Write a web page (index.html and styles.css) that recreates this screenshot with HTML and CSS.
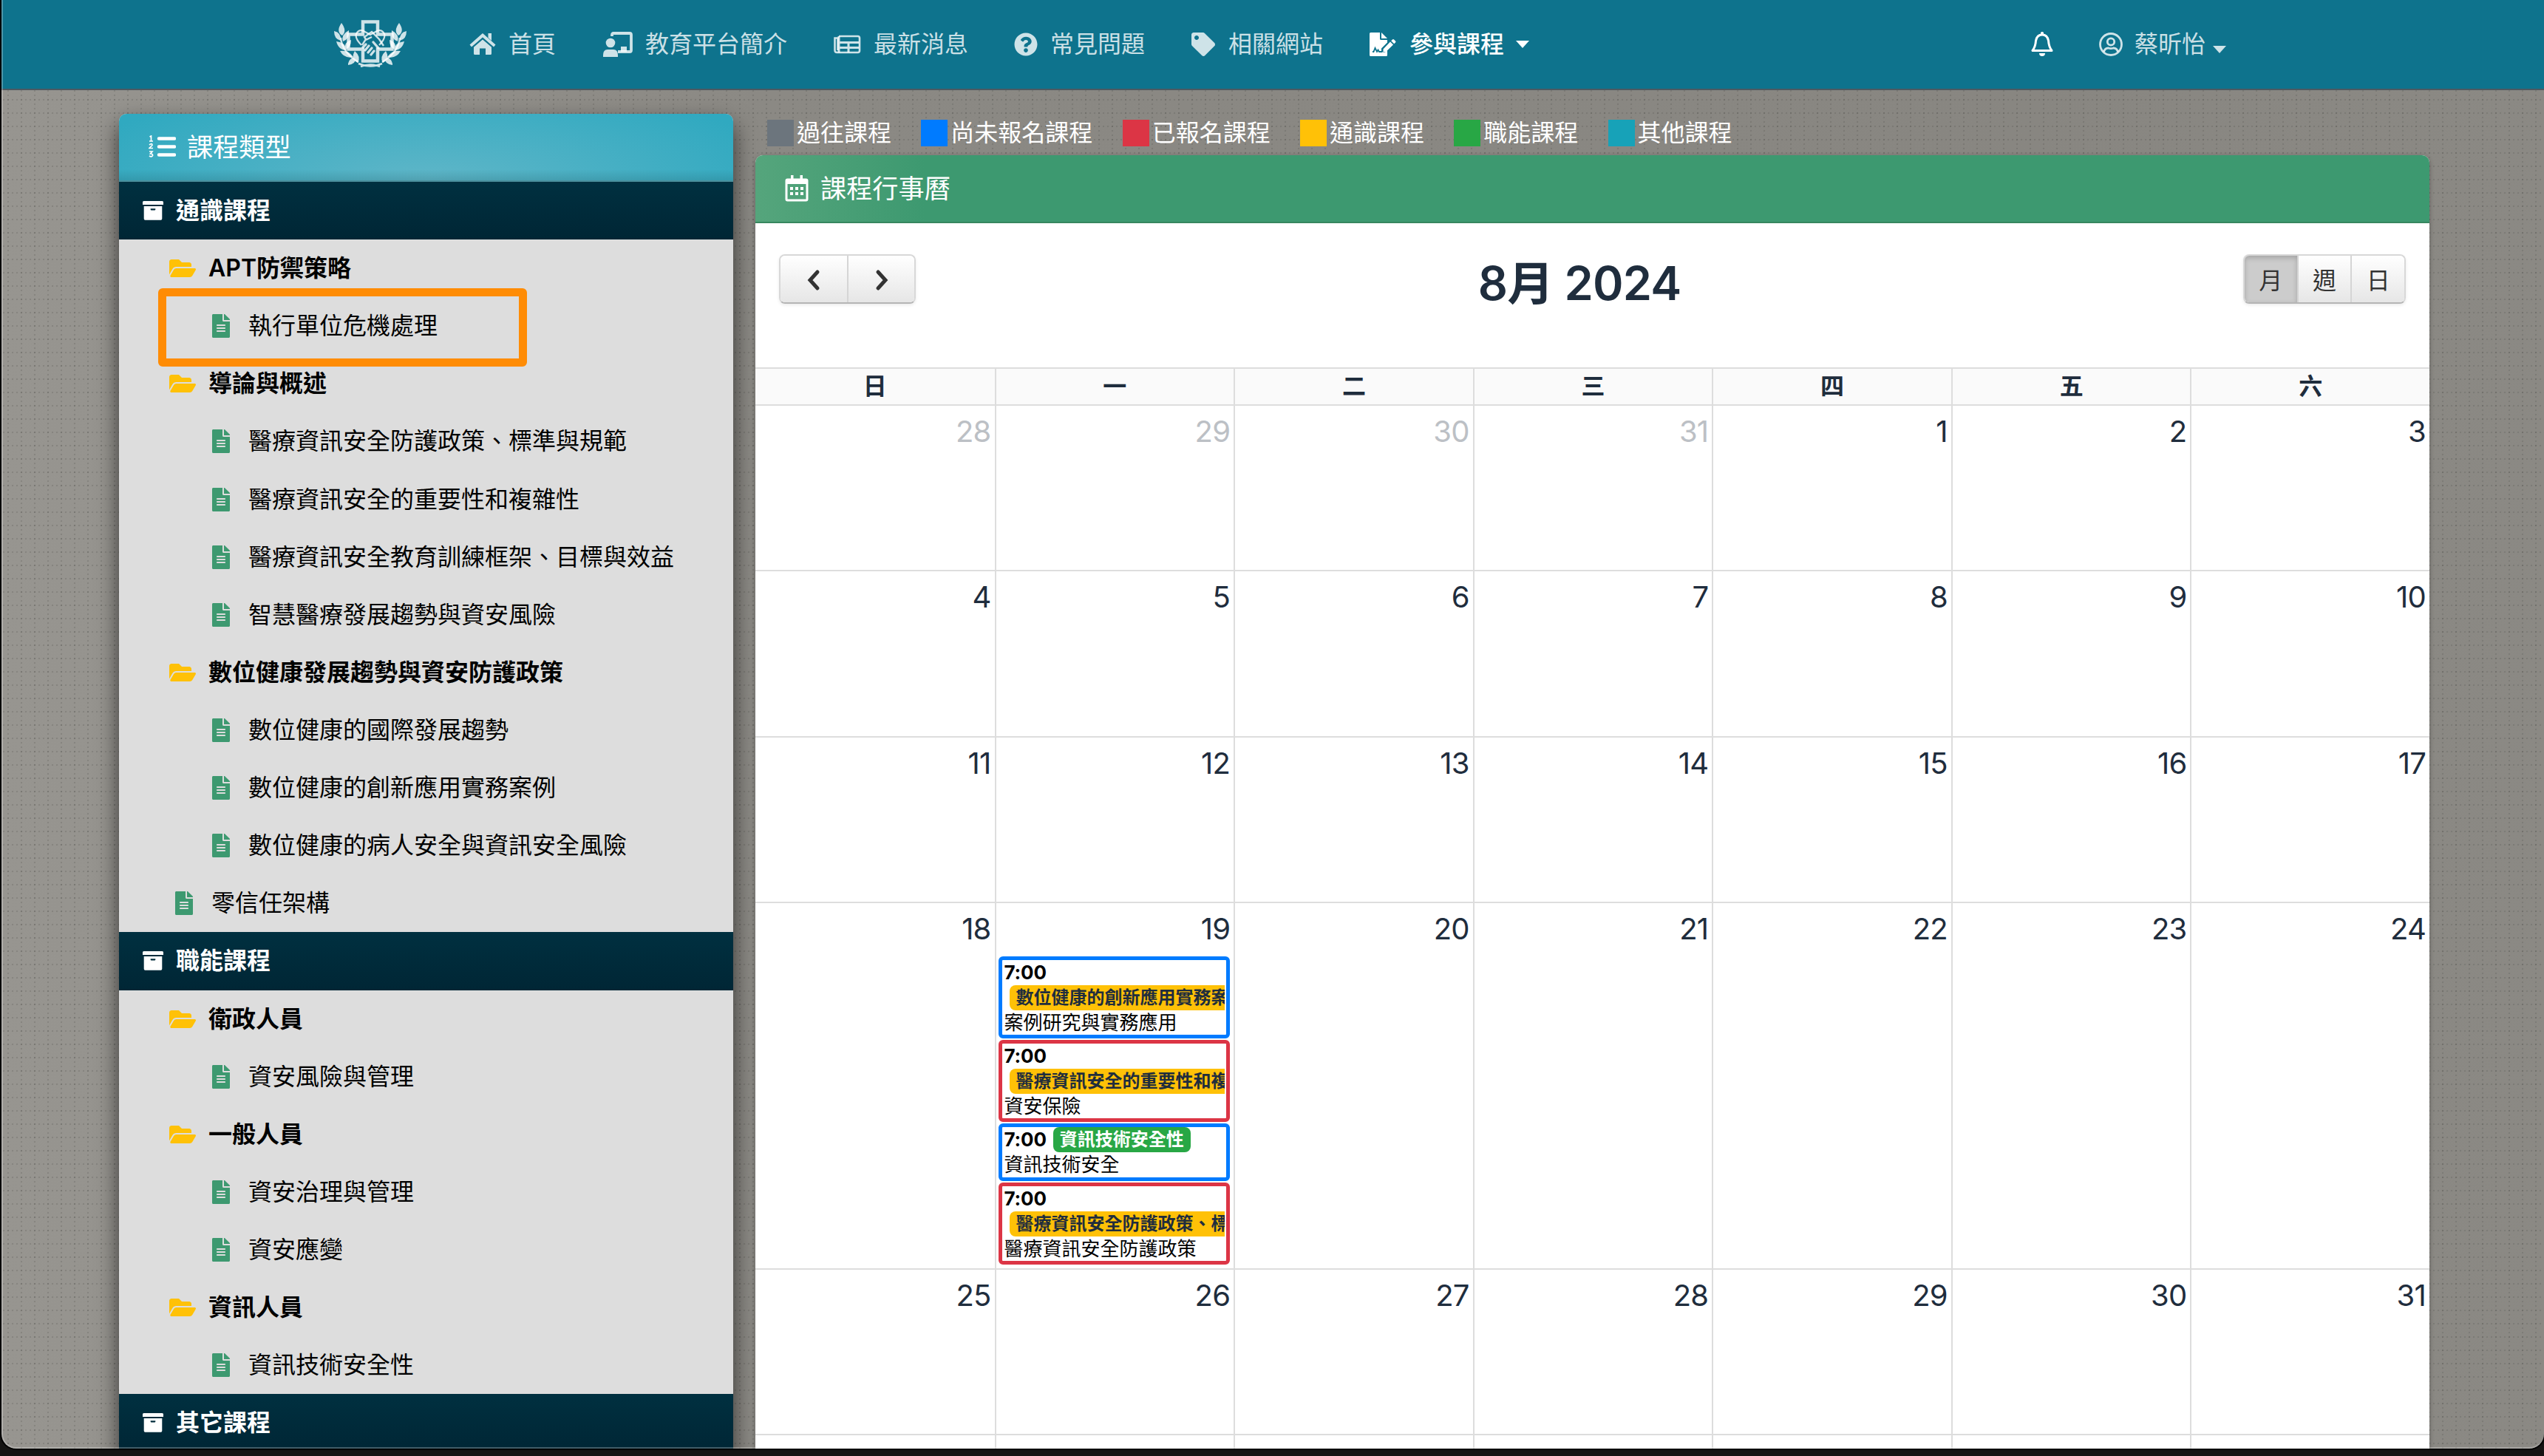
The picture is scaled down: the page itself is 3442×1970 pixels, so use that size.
FILE: index.html
```html
<!DOCTYPE html>
<html lang="zh-Hant">
<head>
<meta charset="utf-8">
<title>課程行事曆</title>
<link rel="stylesheet" href="styles.css">
</head>
<body>
<svg class="defs" aria-hidden="true">
  <symbol id="folder" viewBox="0 0 576 512"><path d="M572.694 292.093L500.27 416.248A63.997 63.997 0 0 1 444.989 448H45.025c-18.523 0-30.064-20.093-20.731-36.093l72.424-124.155A64 64 0 0 1 152 256h399.964c18.523 0 30.064 20.093 20.73 36.093zM152 224h328v-48c0-26.51-21.49-48-48-48H272l-64-64H48C21.49 64 0 85.49 0 112v278.046l69.077-118.418C86.214 242.25 117.989 224 152 224z"/></symbol>
  <symbol id="file" viewBox="0 0 384 512"><path d="M224 136V0H24C10.7 0 0 10.7 0 24v464c0 13.3 10.7 24 24 24h336c13.3 0 24-10.7 24-24V160H248c-13.2 0-24-10.8-24-24zm64 236c0 6.600-5.400 12-12 12H108c-6.600 0-12-5.400-12-12v-8c0-6.600 5.400-12 12-12h168c6.600 0 12 5.400 12 12v8zm0-64c0 6.600-5.400 12-12 12H108c-6.600 0-12-5.400-12-12v-8c0-6.600 5.400-12 12-12h168c6.600 0 12 5.400 12 12v8zm0-72v8c0 6.600-5.400 12-12 12H108c-6.600 0-12-5.400-12-12v-8c0-6.600 5.400-12 12-12h168c6.600 0 12 5.400 12 12zm96-114.100v6.100H256V0h6.100c6.400 0 12.500 2.500 17 7l97.900 98c4.500 4.500 7 10.600 7 16.900z"/></symbol>
  <symbol id="box" viewBox="0 0 28 26"><path d="M1.500 0h25a1.500 1.500 0 0 1 1.500 1.500v3.500h-28v-3.500a1.500 1.500 0 0 1 1.500-1.500zM1.700 7h24.600v17a1.700 1.700 0 0 1-1.700 1.700h-21.200a1.700 1.700 0 0 1-1.700-1.700zM10.700 10.300v1.300q0 .8 .8 .8h5q.8 0 .8-.8v-1.300z" fill-rule="evenodd"/></symbol>
</svg>
<div class="window">
<nav class="navbar">
  <a class="brand"><svg width="98" height="66" viewBox="0 0 98 66">
    <g fill="none" stroke="currentColor">
      <path d="M39 2.500h20v17h19.500v20h-19.500v16h-20v-16h-19.500v-20h19.500z" stroke-width="4.500"/>
      <path d="M37 34q-9-9-7-15 3-6 9-4.500l10 5.500 10-5.500q6-1.500 9 4.500 2 6-7 15" stroke-width="2.200"/>
      <path d="M38 34l5-8-2-3 10-7 10 10 6 9M51 23l-8 4" stroke-width="2.400"/>
      <path d="M39 37l4-4M42 41l5-6M46 44l5-6M50 47l4-5M53 30l7 8" stroke-width="3.200" stroke-linecap="round"/>
      <path d="M9 24q2 20 24 33M89 24q-2 20-24 33M33 59q16 7 32 0M36 63q13-5 26 0" stroke-width="2.500"/>
    </g>
    <g fill="currentColor">
      <g id="sprig"><path d="M10 4q8 11 1 17-9-5-1-17zM0 15q10 2 9 13-9-2-9-13zM20 14q2 11-8 15-3-9 8-15zM3 29q12 1 14 12-11 0-14-12zM23 27q0 10-7 13-4-9 7-13zM8 42q11-2 18 8-12 3-18-8zM19 59q1-8 12-9-2 10-12 11zM28 42q9 8 4 16-10-6-4-16z"/></g>
      <use href="#sprig" transform="matrix(-1 0 0 1 98 0)"/>
    </g>
  </svg></a>
  <a class="link home"><svg width="36" height="30" viewBox="0 0 36 30"><path d="M18 0L35.500 15.500l-2.500 3L18 5.500 3 18.500l-2.500-3zM25.500 0h4.500v10l-4.500-4zM18 8.500l12 10.300v8.700q0 1.500-1.500 1.500h-6.500v-8.500h-8v8.500h-6.500q-1.500 0-1.500-1.500v-8.700z" fill="currentColor"/></svg><span>首頁</span></a>
  <a class="link about"><svg width="40" height="34" viewBox="0 0 40 34"><path d="M12 6v-2q0-2 2-2h22q2 0 2 2v21q0 2-2 2h-16" fill="none" stroke="currentColor" stroke-width="3.800"/><path d="M24 20h8v7h-8z" fill="currentColor"/><circle cx="10" cy="15" r="6.300" fill="currentColor"/><path d="M0 34v-2.500q0-7.500 6-7.500h8q6 0 6 7.500v2.500z" fill="currentColor"/></svg><span>教育平台簡介</span></a>
  <a class="link news"><svg width="37" height="26" viewBox="0 0 37 26"><path d="M7 2h25.500q2.500 0 2.500 2.500v17q0 2.500-2.500 2.500h-28q-3 0-3-3v-16.500h4v16.500" fill="none" stroke="currentColor" stroke-width="2.600"/><path d="M7 2v22M6 10.500h28M6 17.500h28M20 10v14" fill="none" stroke="currentColor" stroke-width="3"/></svg><span>最新消息</span></a>
  <a class="link faq"><svg width="32" height="32" viewBox="0 0 512 512"><path fill="currentColor" d="M504 256c0 136.997-111.043 248-248 248S8 392.997 8 256C8 119.083 119.043 8 256 8s248 111.083 248 248zM262.655 90c-54.497 0-89.255 22.957-116.549 63.758-3.536 5.286-2.353 12.415 2.715 16.258l34.699 26.310c5.205 3.947 12.621 3.008 16.665-2.122 17.864-22.658 30.113-35.797 57.303-35.797 20.429 0 45.698 13.148 45.698 32.958 0 14.976-12.363 22.667-32.534 33.976C247.128 238.528 216 254.941 216 296v4c0 6.627 5.373 12 12 12h56c6.627 0 12-5.373 12-12v-1.333c0-28.462 83.186-29.647 83.186-106.667 0-58.002-60.165-102-116.531-102zM256 338c-25.365 0-46 20.635-46 46 0 25.364 20.635 46 46 46s46-20.636 46-46c0-25.364-20.635-46-46-46z"/></svg><span>常見問題</span></a>
  <a class="link sites"><svg width="32" height="32" viewBox="0 0 512 512"><path fill="currentColor" d="M0 252.118V48C0 21.490 21.490 0 48 0h204.118a48 48 0 0 1 33.941 14.059l211.882 211.882c18.745 18.745 18.745 49.137 0 67.882L293.823 497.941c-18.745 18.745-49.137 18.745-67.882 0L14.059 286.059A48 48 0 0 1 0 252.118zM112 64c-26.510 0-48 21.490-48 48s21.490 48 48 48 48-21.490 48-48-21.490-48-48-48z"/></svg><span>相關網站</span></a>
  <a class="link join active"><svg width="36" height="32" viewBox="0 0 36 32"><path fill="currentColor" d="M2 0h12v8.500q0 1.500 1.500 1.500h8.500v3.500l-8 8v5h5l3-3v7q0 1.500-1.500 1.500h-21q-1.500 0-1.500-1.500v-29q0-1.500 1.500-1.500zM16 0l8 8h-8zM18.500 22.500l9.500-10 4 4-9.800 9.500h-3.700zM29.200 11.300l1.800-1.800q1-1 2 0l2 2q1 1 0 2l-1.800 1.800z"/><path d="M4 26h1.500l2-5 2.500 5 1.500-2.500 1.500 2.500h4" fill="none" stroke="#0e738d" stroke-width="1.800"/></svg><span>參與課程</span><i class="caret"></i></a>
  <a class="bell"><svg width="30" height="34" viewBox="0 0 30 34"><path d="M15 4q-7 0-8.500 8-.5 8-4.500 13.500h26q-4-5.500-4.500-13.500-1.500-8-8.500-8z" fill="none" stroke="currentColor" stroke-width="3" stroke-linejoin="round"/><path d="M13 1q2-2 4 0v4h-4zM11 29h8q0 4-4 4t-4-4z" fill="currentColor"/></svg></a>
  <a class="link user"><svg width="32" height="32" viewBox="0 0 32 32" fill="none" stroke="currentColor" stroke-width="2.800"><circle cx="16" cy="16" r="14.500"/><circle cx="16" cy="12.500" r="4.700"/><path d="M6.500 26q1.500-5 6-5 3.500 1.300 7 0 4.500 0 6 5"/></svg><span>蔡昕怡</span><i class="caret"></i></a>
</nav>

<main class="page">
<aside class="sidebar">
  <header class="side-title"><svg width="37" height="32" viewBox="0 0 37 32"><path d="M14 4.500h21M14 15.500h21M14 26.500h21" stroke="#fff" stroke-width="4.500" stroke-linecap="round"/><path d="M1.500 2l2-1v6.500M1 8h5M1 13q4-3 4 .5l-4 4h5M1 22h4l-2.500 3q3.500 0 3 2.500-1.500 2.500-4.500 .5" fill="none" stroke="#fff" stroke-width="1.700"/></svg><span>課程類型</span></header>
  <h3 class="section"><svg><use href="#box"/></svg>通識課程</h3>
  <ul class="tree">
    <li class="folder"><svg><use href="#folder"/></svg>APT防禦策略</li>
    <li class="item marked"><svg><use href="#file"/></svg>執行單位危機處理</li>
    <li class="folder"><svg><use href="#folder"/></svg>導論與概述</li>
    <li class="item"><svg><use href="#file"/></svg>醫療資訊安全防護政策、標準與規範</li>
    <li class="item"><svg><use href="#file"/></svg>醫療資訊安全的重要性和複雜性</li>
    <li class="item"><svg><use href="#file"/></svg>醫療資訊安全教育訓練框架、目標與效益</li>
    <li class="item"><svg><use href="#file"/></svg>智慧醫療發展趨勢與資安風險</li>
    <li class="folder"><svg><use href="#folder"/></svg>數位健康發展趨勢與資安防護政策</li>
    <li class="item"><svg><use href="#file"/></svg>數位健康的國際發展趨勢</li>
    <li class="item"><svg><use href="#file"/></svg>數位健康的創新應用實務案例</li>
    <li class="item"><svg><use href="#file"/></svg>數位健康的病人安全與資訊安全風險</li>
    <li class="item top"><svg><use href="#file"/></svg>零信任架構</li>
  </ul>
  <h3 class="section"><svg><use href="#box"/></svg>職能課程</h3>
  <ul class="tree">
    <li class="folder"><svg><use href="#folder"/></svg>衛政人員</li>
    <li class="item"><svg><use href="#file"/></svg>資安風險與管理</li>
    <li class="folder"><svg><use href="#folder"/></svg>一般人員</li>
    <li class="item"><svg><use href="#file"/></svg>資安治理與管理</li>
    <li class="item"><svg><use href="#file"/></svg>資安應變</li>
    <li class="folder"><svg><use href="#folder"/></svg>資訊人員</li>
    <li class="item"><svg><use href="#file"/></svg>資訊技術安全性</li>
  </ul>
  <h3 class="section"><svg><use href="#box"/></svg>其它課程</h3>
</aside>

<section class="content">
  <div class="legend">
    <span><i class="gray"></i>過往課程</span><span><i class="blue"></i>尚未報名課程</span><span><i class="red"></i>已報名課程</span><span><i class="yellow"></i>通識課程</span><span><i class="green"></i>職能課程</span><span><i class="teal"></i>其他課程</span>
  </div>
  <div class="panel">
    <header class="panel-title"><svg width="32" height="36" viewBox="0 0 32 36"><path d="M3.500 6h25q1.500 0 1.500 1.500v25q0 1.500-1.500 1.500h-25q-1.500 0-1.500-1.500v-25q0-1.500 1.500-1.500z" fill="none" stroke="#fff" stroke-width="3"/><path d="M2 5h28v7h-28zM8 0h3.500v6h-3.500zM20.500 0h3.500v6h-3.500zM7 16h4v4h-4zM14 16h4v4h-4zM21 16h4v4h-4zM7 23h4v4h-4zM14 23h4v4h-4zM21 23h4v4h-4z" fill="#fff"/></svg><span>課程行事曆</span></header>
    <div class="toolbar">
      <div class="btns nav-btns"><button><svg width="20" height="30" viewBox="0 0 20 30"><path d="M15 4L5 15l10 11"/></svg></button><button><svg width="20" height="30" viewBox="0 0 20 30"><path d="M6 4l10 11L6 26"/></svg></button></div>
      <h2>8月 2024</h2>
      <div class="btns view-btns"><button class="on">月</button><button>週</button><button>日</button></div>
    </div>
    <div class="grid head"><b>日</b><b>一</b><b>二</b><b>三</b><b>四</b><b>五</b><b>六</b></div>
    <div class="grid week"><div class="out">28</div><div class="out">29</div><div class="out">30</div><div class="out">31</div><div>1</div><div>2</div><div>3</div></div>
    <div class="grid week"><div>4</div><div>5</div><div>6</div><div>7</div><div>8</div><div>9</div><div>10</div></div>
    <div class="grid week"><div>11</div><div>12</div><div>13</div><div>14</div><div>15</div><div>16</div><div>17</div></div>
    <div class="grid week tall"><div>18</div><div>19
      <div class="events">
        <article class="ev open"><time>7:00</time><p><mark>數位健康的創新應用實務案例</mark></p><p>案例研究與實務應用</p></article>
        <article class="ev joined"><time>7:00</time><p><mark>醫療資訊安全的重要性和複雜性</mark></p><p>資安保險</p></article>
        <article class="ev open short"><time>7:00</time><mark class="skill">資訊技術安全性</mark><p>資訊技術安全</p></article>
        <article class="ev joined"><time>7:00</time><p><mark>醫療資訊安全防護政策、標準與規範</mark></p><p>醫療資訊安全防護政策</p></article>
      </div></div><div>20</div><div>21</div><div>22</div><div>23</div><div>24</div></div>
    <div class="grid week"><div>25</div><div>26</div><div>27</div><div>28</div><div>29</div><div>30</div><div>31</div></div>
    <div class="grid week"><div></div><div></div><div></div><div></div><div></div><div></div><div></div></div>
  </div>
</section>
</main>
</div>
</body>
</html>
```
FILE: styles.css
```css
*, *::before, *::after { box-sizing: border-box; }
body {
  margin: 0;
  height: 1970px;
  overflow: hidden;
  background: #151413;
  font: 32px/1.5 Inter, "Noto Sans CJK TC", sans-serif;
  color: #1f2d3d;
}
.defs { position: absolute; width: 0; height: 0; }
h2, h3, p, ul { margin: 0; padding: 0; }
svg { flex: none; display: block; }

.window {
  height: 1960px;
  margin-left: 2px;
  overflow: hidden;
  border-radius: 0 0 20px 20px;
  box-shadow: 0 0 0 2px #000;
  background-color: #8c8a85;
  background-image:
    radial-gradient(circle, rgba(70,70,66,.2) 1px, transparent 1.6px),
    radial-gradient(circle, rgba(70,70,66,.2) 1px, transparent 1.6px),
    linear-gradient(90deg, #979590 0, #8b8984 30%, #888681 80%, #8b8984 100%);
  background-size: 6px 18px, 18px 6px, 100% 100%;
  position: relative;
}
.window::after {
  content: "";
  position: absolute;
  inset: 0;
  border: solid rgba(255,255,255,.25);
  border-width: 0 0 2px 2px;
  border-radius: 0 0 20px 20px;
}

.navbar {
  display: flex;
  align-items: center;
  height: 122px;
  padding-left: 450px;
  background: #0e738d;
  border-bottom: 2px solid #4e5961;
  color: rgba(255,255,255,.8);
}
.brand { margin-right: 85px; }
.link { display: flex; align-items: center; white-space: nowrap; }
.home { width: 181px; gap: 17px; }
.about { width: 312px; gap: 17px; }
.news { width: 244px; gap: 17px; }
.faq { width: 240px; gap: 17px; }
.sites { width: 241px; gap: 18px; }
.join { width: 895px; gap: 18px; color: #fff; font-weight: 500; }
.caret { border: solid transparent; border-width: 10px 9px 0; border-top-color: currentColor; }
.join .caret { margin-left: -2px; }
.bell { width: 92px; color: #fff; }
.user { gap: 16px; }
.user .caret { margin: 14px 0 0 -6px; }

.page { display: flex; align-items: flex-start; padding: 32px 155px 0 159px; }
.sidebar {
  width: 831px;
  height: 1900px;
  margin-right: 30px;
  flex: none;
  background: #ddd;
  color: #000;
  border-radius: 10px 10px 0 0;
  box-shadow: 0 14px 30px rgba(0,0,0,.65);
}
.side-title {
  display: flex;
  align-items: center;
  gap: 15px;
  height: 92px;
  padding-left: 40px;
  border-radius: 10px 10px 0 0;
  border-bottom: 2px solid #4b8f9c;
  background:
    linear-gradient(transparent 84%, rgba(30,90,100,.22)),
    radial-gradient(ellipse 60% 150% at 50% 100%, #5fb6c8, #30a9c0);
  color: #fff;
  font-size: 35.2px;
}
.section {
  display: flex;
  align-items: center;
  gap: 17px;
  height: 78.12px;
  padding-left: 32px;
  background: linear-gradient(#003040, #002635);
  color: #fff;
  font-size: 32px;
  font-weight: 700;
}
.section svg { width: 28px; height: 26px; fill: #fff; }
.tree { list-style: none; }
.tree li { display: flex; align-items: center; height: 78.12px; white-space: nowrap; }
.tree .folder { padding-left: 68px; gap: 17px; font-weight: 600; }
.folder svg { width: 36px; height: 32px; fill: #ffc107; }
.item { padding-left: 126px; gap: 25px; }
.item.top { padding-left: 76px; }
.item svg { width: 24px; height: 32px; fill: #3d9970; }
.marked { position: relative; }
.marked::after {
  content: "";
  position: absolute;
  left: 53px;
  top: -12px;
  width: 499px;
  height: 106px;
  border: 11px solid #ff8c05;
  border-radius: 6px;
}

.content { flex: 1; min-width: 0; }
.legend { display: flex; gap: 40.300px; height: 56px; padding: 8px 0 0 16px; color: #fff; line-height: 35px; white-space: nowrap; }
.legend span { display: flex; gap: 4px; height: 36px; }
.legend i { width: 36px; height: 36px; }
.gray { background: #6c757d; }
.blue { background: #007bff; }
.red { background: #dc3545; }
.yellow { background: #ffc107; }
.green { background: #28a745; }
.teal { background: #17a2b8; }

.panel { background: #fff; border-radius: 10px 10px 0 0; box-shadow: 0 2px 6px rgba(0,0,0,.3); }
.panel-title {
  display: flex;
  align-items: center;
  gap: 16px;
  height: 92px;
  padding-left: 40px;
  border-radius: 10px 10px 0 0;
  border-bottom: 2px solid #37875f;
  background: linear-gradient(90deg, #55a57c 0, #3d9970 230px);
  color: #fff;
  font-size: 35.2px;
}
.toolbar { display: flex; justify-content: space-between; align-items: flex-start; height: 195px; padding: 42px 32px 0; }
.toolbar h2 { font-size: 63px; font-weight: 600; line-height: 78px; letter-spacing: -.8px; }
.btns { display: flex; border: 2px solid #d8d8d8; border-bottom-color: #b5b5b5; border-radius: 8px; height: 67px; overflow: hidden; box-shadow: 0 2px 4px rgba(0,0,0,.08); }
.nav-btns { width: 185px; }
.view-btns { width: 220px; }
.btns button {
  flex: 1;
  display: flex;
  align-items: center;
  justify-content: center;
  padding: 2px 0 0;
  border: 0;
  border-left: 2px solid #d5d5d5;
  background: linear-gradient(#fff, #e6e6e6);
  color: #333;
  font: 32px/1 "Noto Sans CJK TC", sans-serif;
}
.view-btns button { padding: 0 0 1px; }
.btns button:first-child { border-left: 0; }
.btns .on { background: #ccc; box-shadow: inset 0 3px 7px rgba(0,0,0,.2); }
.btns path { fill: none; stroke: #333; stroke-width: 5; stroke-linecap: round; }

.grid { display: grid; grid-template-columns: repeat(7, 1fr); border-top: 2px solid #ddd; }
.grid > * { border-left: 2px solid #ddd; min-width: 0; }
.grid > :first-child { border-left: 0; }
.head { height: 50px; background: #fafafa; text-align: center; line-height: 48px; }
.week { height: 224.300px; }
.week > div { padding: 5px 5px 0 3px; font-size: 40px; line-height: 60px; text-align: right; letter-spacing: -.8px; }
.week .out { color: #bcc0c5; }
.tall { height: 496px; }

.events { text-align: left; padding-top: 7px; display: flex; flex-direction: column; gap: 2px; color: #000; font-size: 26px; line-height: 34px; letter-spacing: 0; }
.ev { height: 111px; border: 5px solid; border-radius: 6px; padding: 0 2px 0 3px; white-space: nowrap; overflow: hidden; }
.ev.open { border-color: #007bff; }
.ev.joined { border-color: #dc3545; }
.ev.short { height: 78px; }
.ev time { font-weight: 700; letter-spacing: -.2px; }
.ev p { height: 34px; overflow: hidden; }
.ev mark {
  display: inline-block;
  height: 34px;
  margin-left: 7px;
  padding: 0 9px;
  border-radius: 8px;
  background: #ffc107;
  color: #1f2d3d;
  font-size: 24px;
  font-weight: 700;
  line-height: 34px;
  vertical-align: top;
}
.ev .skill { margin-left: 9px; background: #28a745; color: #fff; }
```
